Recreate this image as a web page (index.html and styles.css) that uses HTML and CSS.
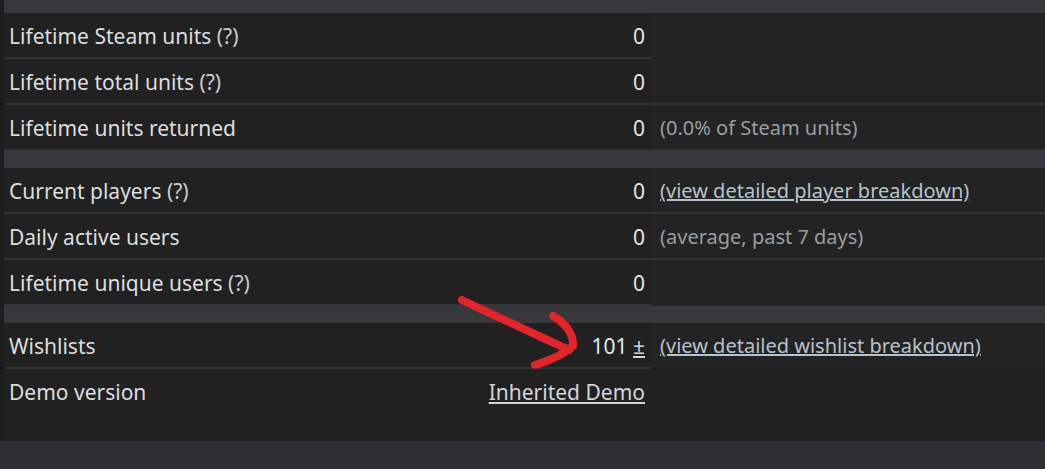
FILE: index.html
```html
<!DOCTYPE html>
<html lang="en">
<head>
    <meta charset="UTF-8">
    <title>Game stats</title>
    <link rel="stylesheet" href="styles.css">
</head>
<body>

<div class="painel">

    <div class="faixa topo"></div>

    <div class="linha">
        <div class="rotulo">Lifetime Steam units <span class="ajuda">(?)</span></div>
        <div class="valor">0</div>
        <div class="nota vazia"></div>
    </div>
    <div class="linha">
        <div class="rotulo">Lifetime total units <span class="ajuda">(?)</span></div>
        <div class="valor">0</div>
        <div class="nota"></div>
    </div>
    <div class="linha">
        <div class="rotulo">Lifetime units returned</div>
        <div class="valor">0</div>
        <div class="nota">(0.0% of Steam units)</div>
    </div>

    <div class="faixa"></div>

    <div class="linha">
        <div class="rotulo">Current players <span class="ajuda">(?)</span></div>
        <div class="valor">0</div>
        <div class="nota"><a href="#">(view detailed player breakdown)</a></div>
    </div>
    <div class="linha">
        <div class="rotulo">Daily active users</div>
        <div class="valor">0</div>
        <div class="nota">(average, past 7 days)</div>
    </div>
    <div class="linha">
        <div class="rotulo">Lifetime unique users <span class="ajuda">(?)</span></div>
        <div class="valor">0</div>
        <div class="nota vazia"></div>
    </div>

    <div class="faixa"></div>

    <div class="linha">
        <div class="rotulo">Wishlists</div>
        <div class="valor">101 <a href="#">±</a></div>
        <div class="nota vazia"><a href="#">(view detailed wishlist breakdown)</a></div>
    </div>
    <div class="linha ultima">
        <div class="rotulo">Demo version</div>
        <div class="valor"><a href="#">Inherited Demo</a></div>
        <div class="nota vazia"></div>
    </div>

    <!-- seta vermelha desenhada por cima -->
    <svg class="seta" width="140" height="90" viewBox="0 0 140 90">
        <path d="M7 8 C 40 24, 80 42, 114 58" fill="none" stroke="#e3242b" stroke-width="8" stroke-linecap="round"/>
        <path d="M98 24 C 110 31, 119 42, 118 54 C 108 63, 93 69, 80 73" fill="none" stroke="#e3242b" stroke-width="8" stroke-linecap="round" stroke-linejoin="round"/>
    </svg>
</div>

<div class="rodape"></div>

</body>
</html>
```

FILE: styles.css
```css
body {
    margin: 0;
    font-family: "Noto Sans", "Open Sans", sans-serif;
    background-color: #2e2f35;
    color: #dcdedf;
}
.painel {
    position: relative;
    background-color: #1d1d1e;
    padding-left: 4px;
}
.faixa {
    height: 17px;
    background-color: #37383c;
}
.faixa.topo {
    height: 13px;
}
.linha {
    display: flex;
    height: 46px;
    font-size: 21px;
    line-height: 46px;
}
.linha.ultima {
    height: 72px;
    align-items: flex-start;
}
.rotulo {
    width: 440px;
    padding-left: 5px;
    background-color: #212121;
    border-bottom: 2px solid #333438;
}
.valor {
    width: 196px;
    padding-right: 6px;
    text-align: right;
    background-color: #212121;
    border-bottom: 2px solid #333438;
    color: #e4e6e7;
}
.nota {
    flex: 1;
    padding-left: 9px;
    font-size: 20px;
    color: #9a9ea4;
    background-color: #232323;
    border-bottom: 2px solid #333438;
}
.nota.vazia {
    border-bottom-color: #232323;
}
.ultima .rotulo, .ultima .valor, .ultima .nota {
    height: 72px;
    border-bottom: none;
    background-color: #212121;
}
.ajuda {
    color: #c6cbd0;
}
a {
    color: #b7c2ca;
    text-decoration: underline;
}
.valor a {
    color: #d2d6da;
}
.seta {
    position: absolute;
    left: 455px;
    top: 292px;
}
.rodape {
    height: 29px;
}
```
